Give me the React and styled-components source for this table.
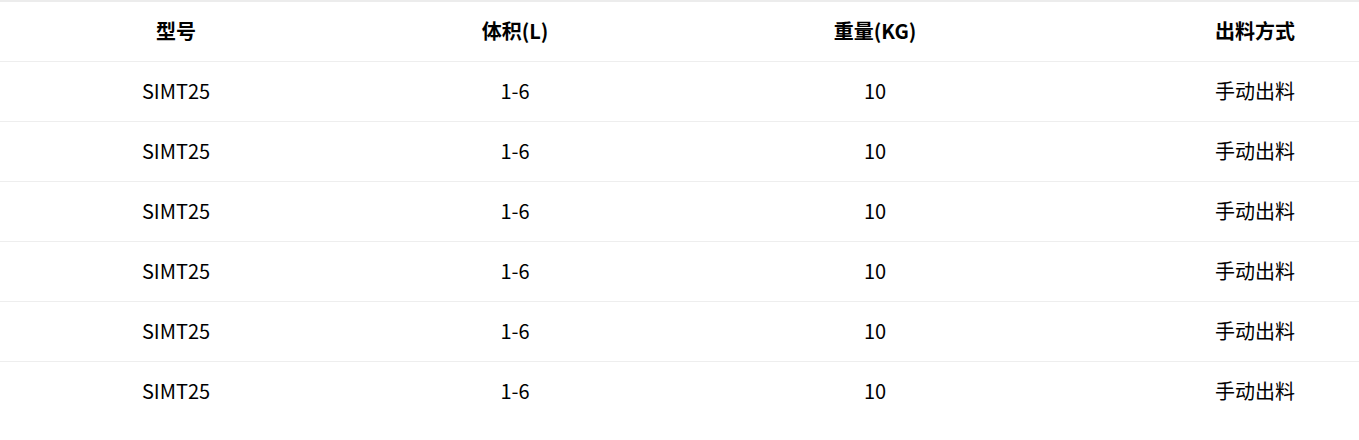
import React from 'react';
import styled, { createGlobalStyle } from 'styled-components';

const GlobalStyle = createGlobalStyle`
    html, body {
        margin: 0;
        padding: 0;
        background: #ffffff;
    }
    body {
        font-family: "Microsoft YaHei", "Noto Sans CJK SC", "Noto Sans", sans-serif;
        color: #000000;
    }
`;

const Table = styled.div`
    width: 1359px;
    border-top: 2px solid #ececec;
`;

const Row = styled.div`
    display: grid;
    grid-template-columns: 352px 326px 394px 1fr;
    height: ${p => (p.$first ? '59px' : '60px')};
    align-items: center;
    padding-bottom: 2px;
    border-top: ${p => (p.$first ? 'none' : '1px solid #eeeeee')};
    box-sizing: border-box;
`;

const Cell = styled.div`
    font-size: 20px;
    line-height: 24px;
    font-weight: ${p => (p.$head ? 700 : 400)};
    text-align: center;
    white-space: nowrap;

    &:last-child {
        text-align: right;
        padding-right: 64px;
    }
`;

const rows = Array.from({ length: 6 }, () => ['SIMT25', '1-6', '10', '手动出料']);

const App = () => {
    return (
        <>
            <GlobalStyle />
            <Table>
                <Row $first>
                    <Cell $head>型号</Cell>
                    <Cell $head>体积(L)</Cell>
                    <Cell $head>重量(KG)</Cell>
                    <Cell $head>出料方式</Cell>
                </Row>
                {rows.map((r, i) => (
                    <Row key={i}>
                        {r.map((c, j) => (
                            <Cell key={j}>{c}</Cell>
                        ))}
                    </Row>
                ))}
            </Table>
        </>
    );
};

export default App;
